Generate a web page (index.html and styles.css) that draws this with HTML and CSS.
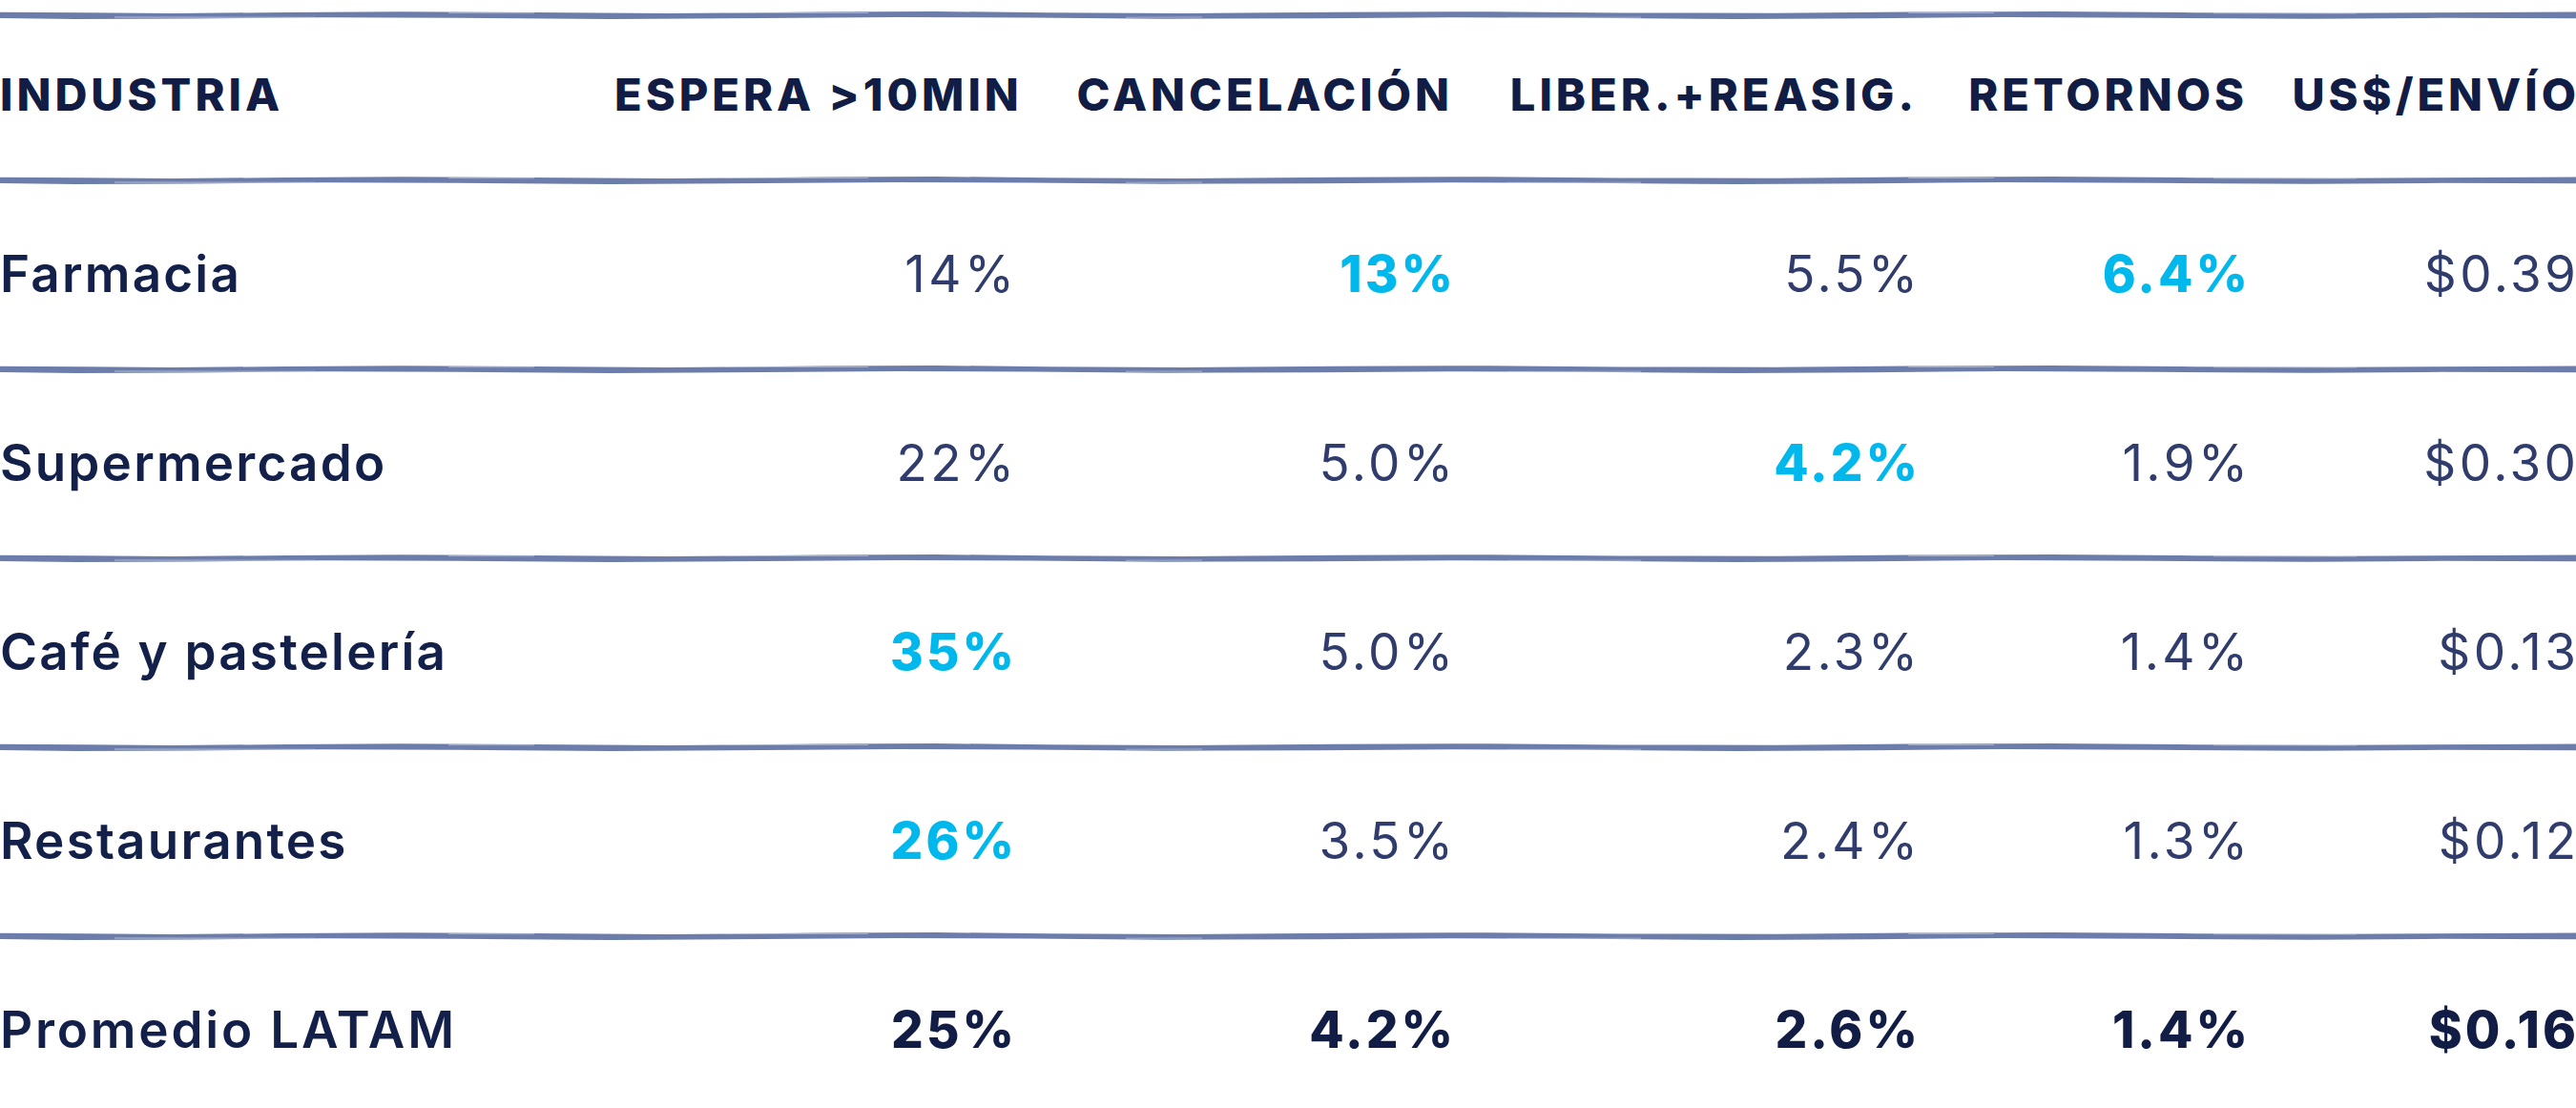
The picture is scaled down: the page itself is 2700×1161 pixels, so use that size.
FILE: index.html
```html
<!DOCTYPE html>
<html lang="es">
<head>
<meta charset="utf-8">
<title>Industria</title>
<link rel="stylesheet" href="styles.css">
</head>
<body>
<svg class="defs" width="0" height="0" aria-hidden="true">
  <defs>
    <symbol id="brush" viewBox="0 0 2700 10" preserveAspectRatio="none">
      <path d="M0 1.8 L90 2.2 L180 3.0 L300 2.0 L420 1.2 L560 2.0 L700 3.0 L860 1.6 L980 1.0 L1100 2.2 L1240 3.0 L1400 1.8 L1560 1.2 L1700 2.4 L1860 2.8 L2000 1.6 L2150 1.0 L2300 2.2 L2450 2.8 L2600 2.0 L2700 1.6 L2700 8.2 L2560 7.8 L2420 8.8 L2260 7.8 L2100 7.0 L1960 8.2 L1820 9.0 L1660 7.8 L1520 7.2 L1380 8.2 L1220 8.8 L1080 7.4 L940 7.0 L800 8.0 L640 9.0 L480 7.8 L340 7.2 L200 8.4 L80 9.0 L0 8.0 Z" fill="#6c7dab"/>
      <path d="M120 7.0 L330 7.3" stroke="#d3d9e8" stroke-width="0.9" opacity="0.8"/>
      <path d="M470 2.6 L560 2.8" stroke="#d3d9e8" stroke-width="0.8" opacity="0.7"/>
      <path d="M760 2.4 L910 2.6" stroke="#d3d9e8" stroke-width="0.8" opacity="0.7"/>
      <path d="M1180 7.2 L1260 7.0" stroke="#d3d9e8" stroke-width="0.8" opacity="0.7"/>
      <path d="M1580 7.4 L1720 7.2" stroke="#d3d9e8" stroke-width="0.8" opacity="0.7"/>
      <path d="M2000 2.4 L2090 2.6" stroke="#d3d9e8" stroke-width="0.8" opacity="0.7"/>
      <path d="M2320 2.8 L2470 3.0" stroke="#d3d9e8" stroke-width="0.8" opacity="0.7"/>
    </symbol>
  </defs>
</svg>
<main class="table">
  <svg class="rule"><use href="#brush"/></svg>
  <div class="row head">
    <div class="cell label">INDUSTRIA</div>
    <div class="cell num">ESPERA &gt;10MIN</div>
    <div class="cell num">CANCELACIÓN</div>
    <div class="cell num">LIBER.+REASIG.</div>
    <div class="cell num">RETORNOS</div>
    <div class="cell num">US$/ENVÍO</div>
  </div>
  <svg class="rule"><use href="#brush"/></svg>
  <div class="row body">
    <div class="cell label">Farmacia</div>
    <div class="cell num">14%</div>
    <div class="cell num hi">13%</div>
    <div class="cell num">5.5%</div>
    <div class="cell num hi">6.4%</div>
    <div class="cell num">$0.39</div>
  </div>
  <svg class="rule"><use href="#brush"/></svg>
  <div class="row body">
    <div class="cell label">Supermercado</div>
    <div class="cell num">22%</div>
    <div class="cell num">5.0%</div>
    <div class="cell num hi">4.2%</div>
    <div class="cell num">1.9%</div>
    <div class="cell num">$0.30</div>
  </div>
  <svg class="rule"><use href="#brush"/></svg>
  <div class="row body">
    <div class="cell label">Café y pastelería</div>
    <div class="cell num hi">35%</div>
    <div class="cell num">5.0%</div>
    <div class="cell num">2.3%</div>
    <div class="cell num">1.4%</div>
    <div class="cell num">$0.13</div>
  </div>
  <svg class="rule"><use href="#brush"/></svg>
  <div class="row body">
    <div class="cell label">Restaurantes</div>
    <div class="cell num hi">26%</div>
    <div class="cell num">3.5%</div>
    <div class="cell num">2.4%</div>
    <div class="cell num">1.3%</div>
    <div class="cell num">$0.12</div>
  </div>
  <svg class="rule"><use href="#brush"/></svg>
  <div class="row body total">
    <div class="cell label">Promedio LATAM</div>
    <div class="cell num">25%</div>
    <div class="cell num">4.2%</div>
    <div class="cell num">2.6%</div>
    <div class="cell num">1.4%</div>
    <div class="cell num">$0.16</div>
  </div>
</main>
</body>
</html>
```
FILE: styles.css
```css
html, body {
  margin: 0;
  padding: 0;
  background: #ffffff;
  overflow: hidden;
}
body {
  font-family: Inter, "Noto Sans", "Liberation Sans", sans-serif;
  color: #13204a;
}
.defs {
  position: absolute;
  width: 0;
  height: 0;
}
.table {
  display: flex;
  flex-direction: column;
  width: 2700px;
  padding-top: 12px;
}
.rule {
  display: block;
  width: 2700px;
  height: 10px;
  margin: -1.5px 0;
}
.row {
  display: grid;
  grid-template-columns: 644px 419px 460px 487px 346px 344px;
  align-items: center;
  height: 191px;
}
.row.head {
  height: 166px;
}
.cell {
  white-space: nowrap;
  line-height: 1;
}
.cell.num {
  text-align: right;
}

/* header row */
.head .cell {
  font-size: 47px;
  font-weight: 800;
  color: #111d45;
  letter-spacing: 4px;
  padding-bottom: 8px;
}
.head .cell.num:last-child {
  margin-right: -4px;
}

/* body rows */
.body .label {
  font-size: 53px;
  font-weight: 600;
  color: #13204a;
  letter-spacing: 2.2px;
}
.body .num {
  font-size: 53px;
  font-weight: 400;
  color: #2f3c6c;
  letter-spacing: 3.4px;
  margin-right: -3.4px;
}
.body .num.hi {
  font-weight: 800;
  color: #00b8ec;
  letter-spacing: 3px;
  margin-right: -3px;
}
.total .label {
  letter-spacing: 2.8px;
}
.total .num {
  font-weight: 800;
  color: #111d45;
  letter-spacing: 3px;
  margin-right: -3px;
}
```
